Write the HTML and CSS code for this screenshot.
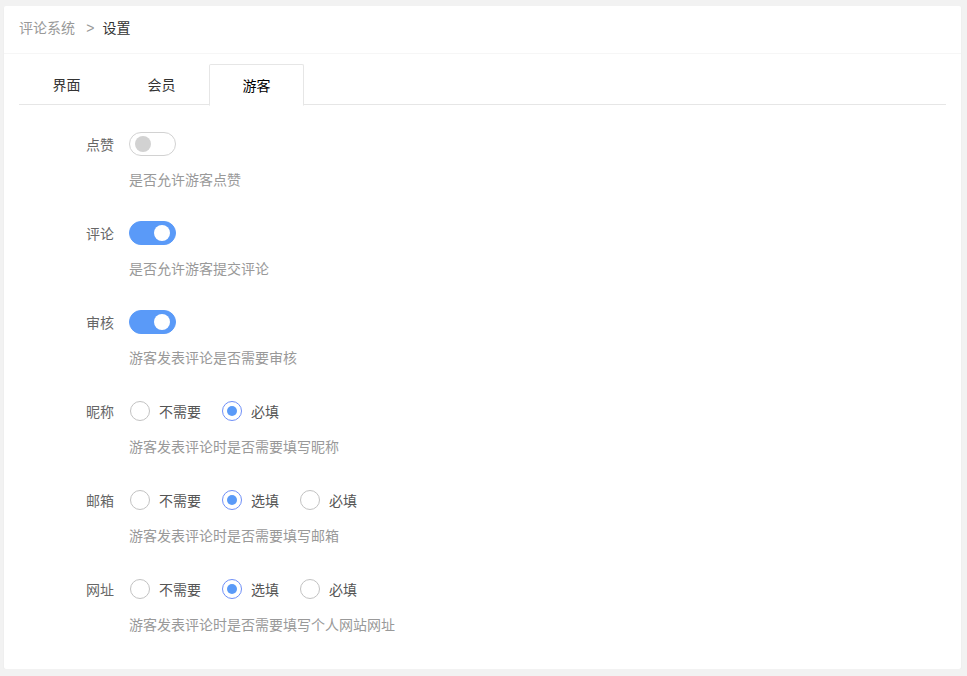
FILE: index.html
```html
<!DOCTYPE html>
<html lang="zh-CN">
  <head>
    <meta charset="UTF-8" />
    <meta name="viewport" content="width=device-width, initial-scale=1.0" />
    <title>评论系统 - 设置</title>
    <link rel="stylesheet" href="styles.css">
  </head>
  <body>
    <div class="card">
      <div class="card-header">
        <span class="crumb">评论系统</span>
        <span class="crumb-sep">&gt;</span>
        <span class="crumb-current">设置</span>
      </div>
      <div class="card-body">
        <ul class="tab-title">
          <li>界面</li>
          <li>会员</li>
          <li class="active">游客</li>
        </ul>
        <form class="tab-content">
          <div class="form-item">
            <label class="form-label">点赞</label>
            <div class="input-block">
              <span class="switch"><i></i></span>
            </div>
            <div class="form-aux">是否允许游客点赞</div>
          </div>

          <div class="form-item">
            <label class="form-label">评论</label>
            <div class="input-block">
              <span class="switch on"><i></i></span>
            </div>
            <div class="form-aux">是否允许游客提交评论</div>
          </div>

          <div class="form-item">
            <label class="form-label">审核</label>
            <div class="input-block">
              <span class="switch on"><i></i></span>
            </div>
            <div class="form-aux">游客发表评论是否需要审核</div>
          </div>

          <div class="form-item">
            <label class="form-label">昵称</label>
            <div class="input-block">
              <span class="radio"><i></i>不需要</span>
              <span class="radio checked"><i></i>必填</span>
            </div>
            <div class="form-aux">游客发表评论时是否需要填写昵称</div>
          </div>

          <div class="form-item">
            <label class="form-label">邮箱</label>
            <div class="input-block">
              <span class="radio"><i></i>不需要</span>
              <span class="radio checked"><i></i>选填</span>
              <span class="radio"><i></i>必填</span>
            </div>
            <div class="form-aux">游客发表评论时是否需要填写邮箱</div>
          </div>

          <div class="form-item">
            <label class="form-label">网址</label>
            <div class="input-block">
              <span class="radio"><i></i>不需要</span>
              <span class="radio checked"><i></i>选填</span>
              <span class="radio"><i></i>必填</span>
            </div>
            <div class="form-aux">游客发表评论时是否需要填写个人网站网址</div>
          </div>
        </form>
      </div>
    </div>
  </body>
</html>
```

FILE: styles.css
```css
body {
  font-family: "Noto Sans CJK SC", "Liberation Sans", sans-serif;
  font-size: 14px;
  color: #333;
  background-color: #f2f2f2;
  margin: 0;
  padding: 6px 6px 0 4px;
}

.card {
  background-color: #fff;
  border-radius: 2px;
  box-shadow: 0 1px 2px rgba(0, 0, 0, 0.05);
}

.card-header {
  height: 42px;
  line-height: 42px;
  padding: 0 15px 5px;
  border-bottom: 1px solid #f6f6f6;
}

.crumb,
.crumb-sep {
  color: #999;
}

.crumb-sep {
  margin: 0 5px 0 8px;
  font-family: "Liberation Sans", sans-serif;
}

.crumb-current {
  color: #333;
}

.card-body {
  padding: 10px 15px;
}

.tab-title {
  list-style: none;
  margin: 0;
  padding: 0;
  height: 40px;
  display: flex;
  border-bottom: 1px solid #e6e6e6;
}

.tab-title li {
  min-width: 65px;
  padding: 0 15px;
  line-height: 40px;
  text-align: center;
  color: #333;
  cursor: pointer;
}

.tab-title li.active {
  color: #000;
  background-color: #fff;
  border: 1px solid #e6e6e6;
  border-bottom-color: #fff;
  border-radius: 2px 2px 0 0;
  height: 40px;
  line-height: 40px;
  min-width: 63px;
}

.tab-content {
  margin: 0;
  padding: 20px 0 0;
}

.form-item {
  display: grid;
  grid-template-columns: 110px 1fr;
  margin-bottom: 25px;
}

.form-item:last-child {
  margin-bottom: 25px;
}

.form-label {
  padding: 9px 15px 9px 0;
  line-height: 20px;
  text-align: right;
  color: #666;
}

.input-block {
  display: flex;
  align-items: center;
  height: 38px;
}

.form-aux {
  grid-column: 2;
  margin-top: 6px;
  line-height: 20px;
  color: #999;
}

.switch {
  position: relative;
  box-sizing: border-box;
  width: 47px;
  height: 24px;
  border: 1px solid #d2d2d2;
  border-radius: 20px;
  background-color: #fff;
  cursor: pointer;
}

.switch i {
  position: absolute;
  left: 5px;
  top: 3px;
  width: 16px;
  height: 16px;
  border-radius: 50%;
  background-color: #d2d2d2;
}

.switch.on {
  border-color: #5a9af8;
  background-color: #5a9af8;
}

.switch.on i {
  left: auto;
  right: 5px;
  background-color: #fff;
}

.radio {
  display: inline-flex;
  align-items: center;
  margin-right: 20px;
  color: #555;
  cursor: pointer;
}

.radio i {
  box-sizing: border-box;
  width: 20px;
  height: 20px;
  margin: 0 9px 0 1px;
  border: 1px solid #c2c2c2;
  border-radius: 50%;
  position: relative;
}

.radio.checked i {
  border-color: #6f8ff7;
}

.radio.checked i::after {
  content: "";
  position: absolute;
  left: 4px;
  top: 4px;
  width: 10px;
  height: 10px;
  border-radius: 50%;
  background-color: #5a9af8;
}
```
